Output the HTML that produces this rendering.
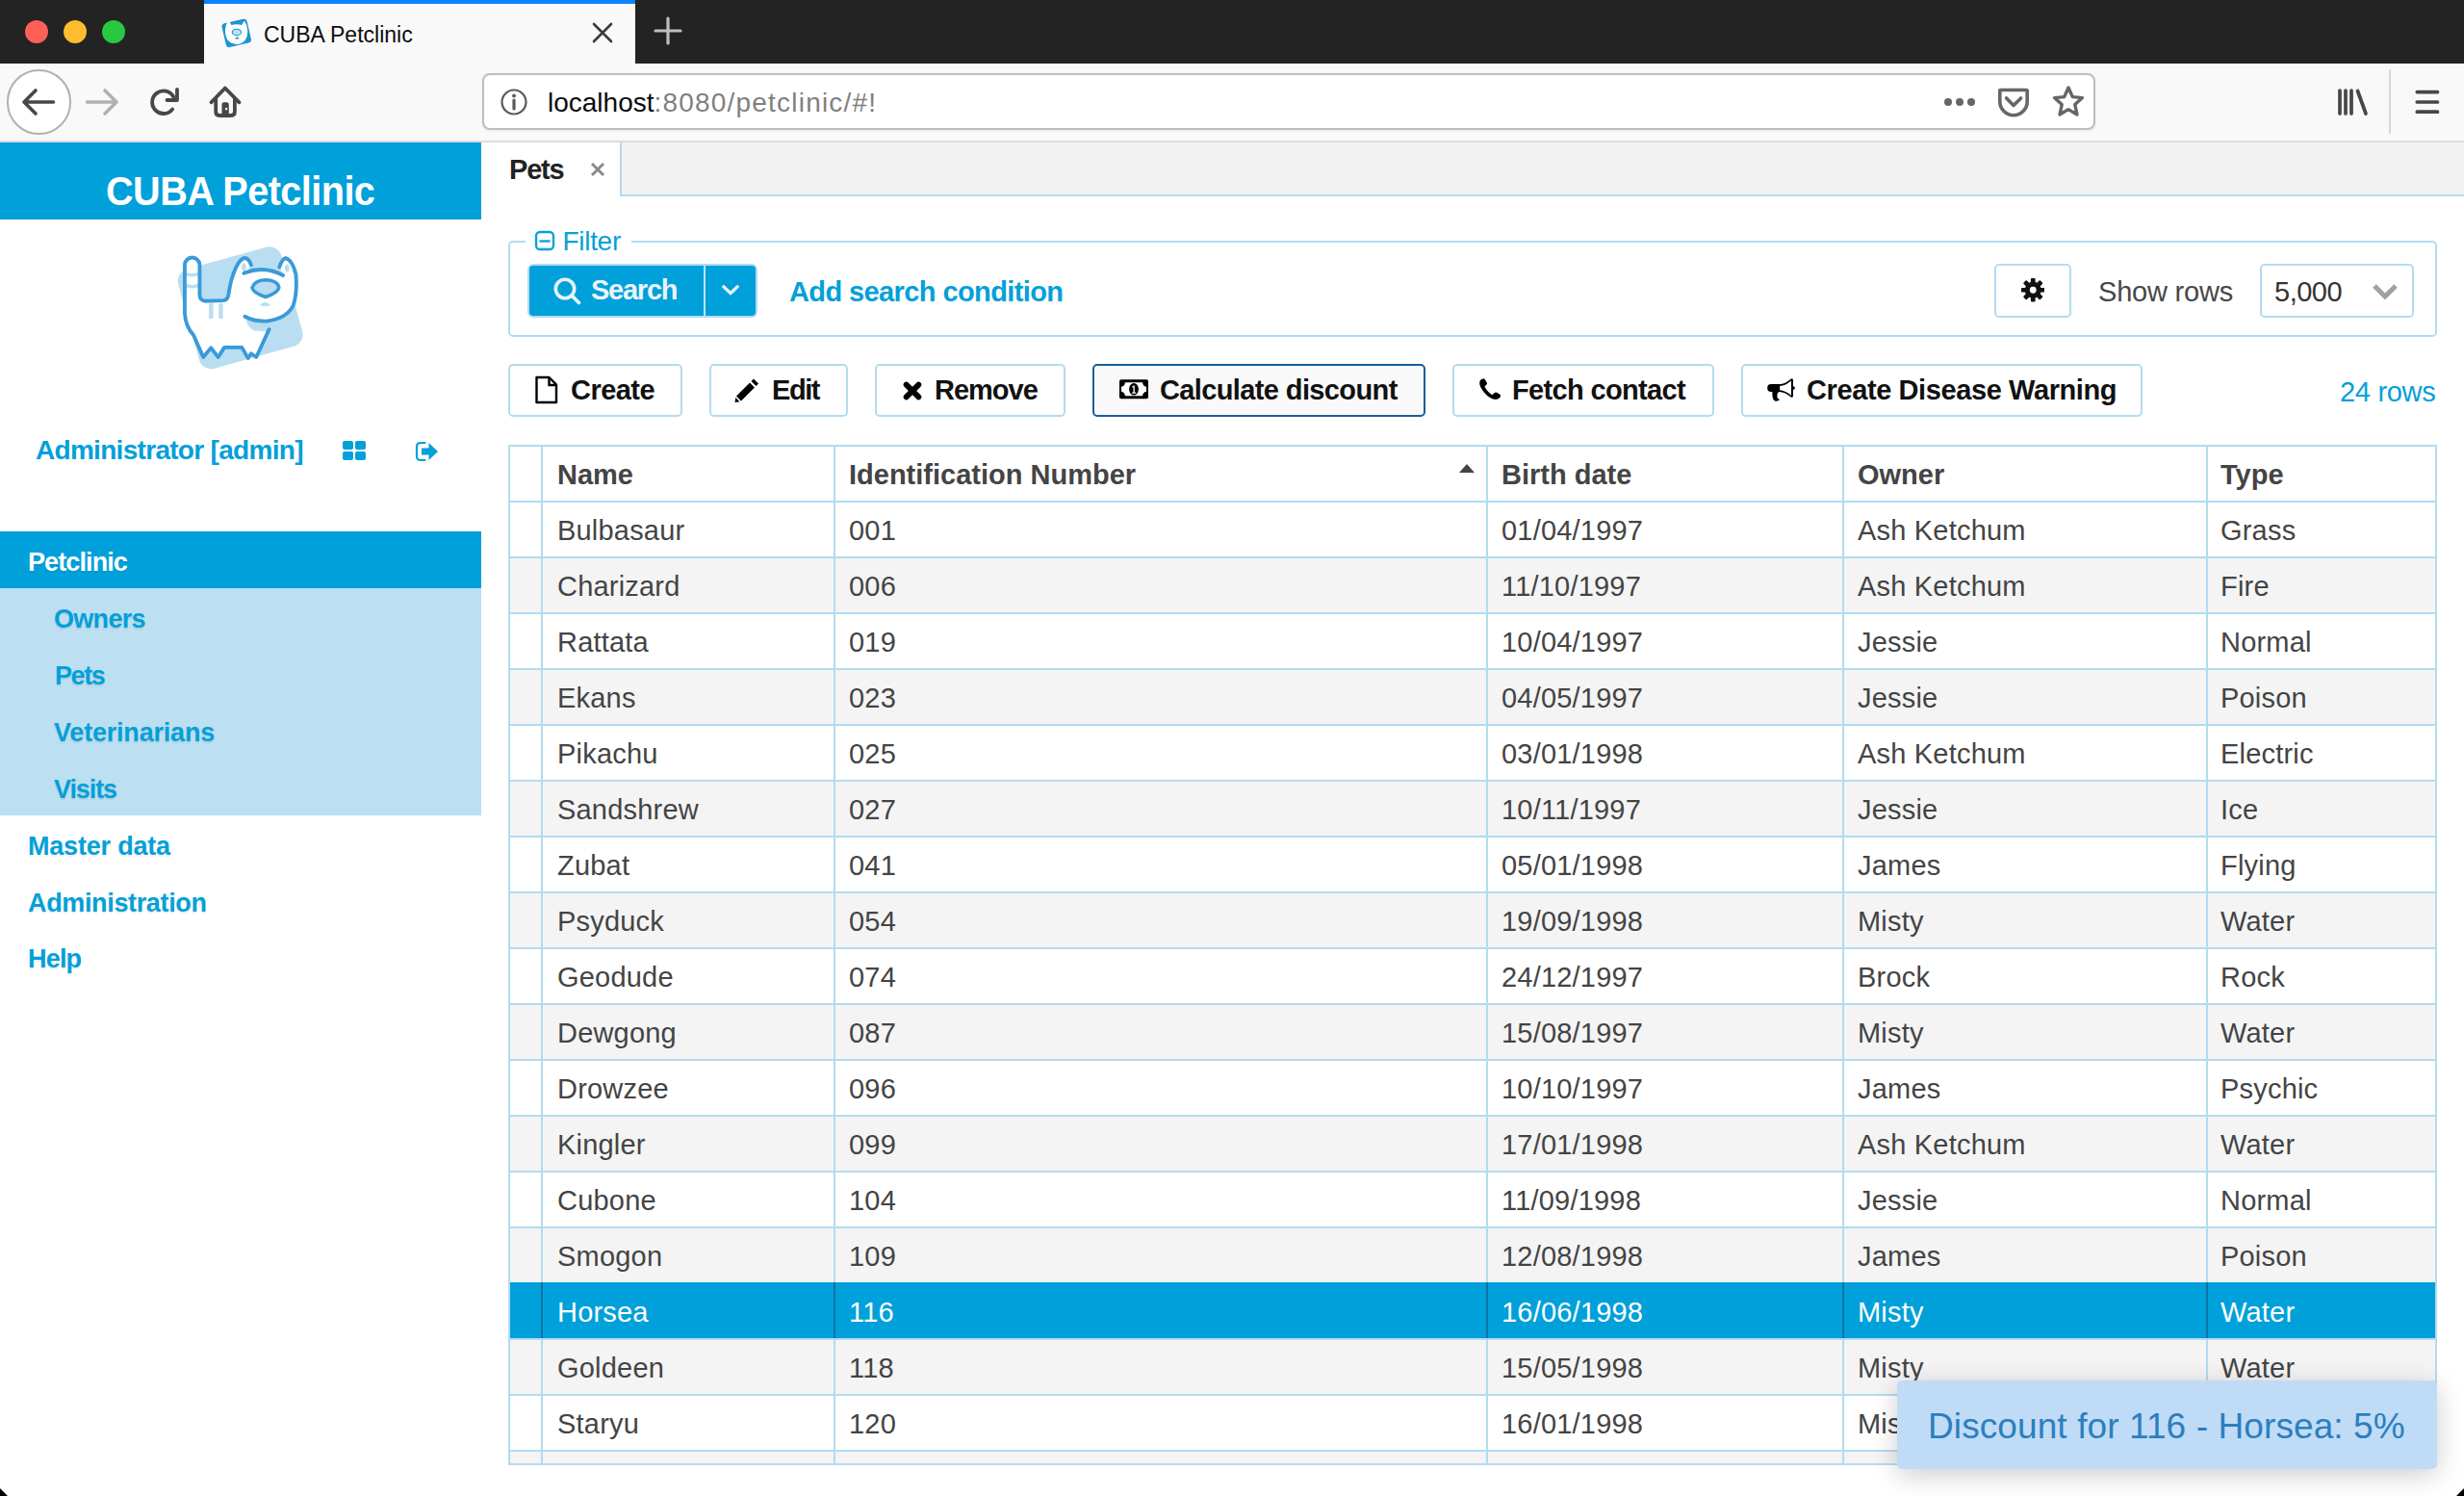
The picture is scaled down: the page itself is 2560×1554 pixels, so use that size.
<!DOCTYPE html>
<html><head><meta charset="utf-8"><title>CUBA Petclinic</title>
<style>
html,body{margin:0;padding:0;width:2560px;height:1554px;overflow:hidden;background:#fff}
body{position:relative;font-family:"Liberation Sans", sans-serif}
.a{position:absolute;display:block}
.t{position:absolute;white-space:nowrap;line-height:0;font-family:"Liberation Sans", sans-serif}
</style></head><body>
<div class="a" style="left:0px;top:0px;width:2560px;height:66px;background:#232323"></div>
<div class="a" style="left:26px;top:21px;width:24px;height:24px;background:#fe5f57;border-radius:50%"></div>
<div class="a" style="left:66px;top:21px;width:24px;height:24px;background:#febc2e;border-radius:50%"></div>
<div class="a" style="left:106px;top:21px;width:24px;height:24px;background:#28c840;border-radius:50%"></div>
<div class="a" style="left:212px;top:0px;width:448px;height:66px;background:#f9f9f9"></div>
<div class="a" style="left:212px;top:0px;width:448px;height:4px;background:#0a84ff"></div>
<svg class="a" style="left:220px;top:10px" width="60" height="50" viewBox="0 0 1795 1496"><rect x="370" y="350" width="800" height="760" rx="100" fill="#1a95d4" transform="rotate(-13 770 730)"/><path d="M420 600 Q440 430 520 340 Q580 400 610 480 Q770 430 930 480 Q970 400 1010 350 Q1100 450 1110 620 Q1130 820 1040 950 Q930 1075 770 1075 Q600 1070 500 950 Q410 820 420 600 Z" fill="#fff"/><ellipse cx="775" cy="700" rx="140" ry="95" fill="#bfe0f4" stroke="#1a95d4" stroke-width="35"/><path d="M715 915 L790 835 L860 915 Z" fill="#1a95d4"/></svg>
<div class="t" style="left:274px;top:36.03px;font-size:23px;color:#0c0c0d;">CUBA Petclinic</div>
<svg class="a" style="left:614px;top:22px" width="24" height="24" viewBox="0 0 24 24"><path d="M3 3 L21 21 M21 3 L3 21" stroke="#3b3b3b" stroke-width="2.6" stroke-linecap="round"/></svg>
<svg class="a" style="left:678px;top:16px" width="32" height="32" viewBox="0 0 32 32"><path d="M16 3 V29 M3 16 H29" stroke="#bfbfbf" stroke-width="3.2" stroke-linecap="round"/></svg>
<div class="a" style="left:0px;top:66px;width:2560px;height:80px;background:#f9f9f9"></div>
<div class="a" style="left:0px;top:146px;width:2560px;height:2px;background:#dcdcdc"></div>
<div class="a" style="left:6.5px;top:72px;width:67.5px;height:67.5px;background:#fff;border:2px solid #b1b1b1;border-radius:50%;box-sizing:border-box"></div>
<svg class="a" style="left:20px;top:86px" width="40" height="40" viewBox="0 0 40 40"><path d="M35.5 20 H5.5 M17 8 L5 20 L17 32" stroke="#474747" stroke-width="3.6" fill="none" stroke-linecap="round" stroke-linejoin="round"/></svg>
<svg class="a" style="left:86px;top:86px" width="40" height="40" viewBox="0 0 40 40"><path d="M4.5 20 H34.5 M23 8 L35 20 L23 32" stroke="#b1b1b1" stroke-width="3.6" fill="none" stroke-linecap="round" stroke-linejoin="round"/></svg>
<svg class="a" style="left:150px;top:86px" width="40" height="40" viewBox="0 0 40 40"><path d="M30.3 14.6 A11.8 11.8 0 1 0 29.1 27.6" stroke="#474747" stroke-width="3.8" fill="none" stroke-linecap="round"/><path d="M34 7 V18 H23.5" stroke="#474747" stroke-width="3.8" fill="none" stroke-linecap="round" stroke-linejoin="round"/></svg>
<svg class="a" style="left:214px;top:86px" width="40" height="40" viewBox="0 0 40 40"><path d="M5.5 20.3 L19.9 5.5 L34.5 20.3" stroke="#474747" stroke-width="3.8" fill="none" stroke-linecap="round" stroke-linejoin="round"/><path d="M10.2 16 V30 Q10.2 34 14.2 34 H25.9 Q29.9 34 29.9 30 V16" stroke="#474747" stroke-width="3.8" fill="none"/><path d="M16.5 33 V22.5 Q16.5 20.3 18.7 20.3 H21.6 Q23.8 20.3 23.8 22.5 V33 Z" fill="#474747"/><rect x="20" y="26" width="2.2" height="2.2" fill="#f9f9f9"/></svg>
<div class="a" style="left:501px;top:76px;width:1676px;height:59px;background:#fff;border:2px solid #bdbdbd;border-radius:8px;box-sizing:border-box;box-shadow:0 1px 3px rgba(0,0,0,0.08)"></div>
<svg class="a" style="left:518px;top:90px" width="32" height="32" viewBox="0 0 32 32"><circle cx="16" cy="16" r="12.5" stroke="#5a5a5a" stroke-width="2.2" fill="none"/><circle cx="16" cy="9.5" r="1.9" fill="#5a5a5a"/><path d="M16 14 V23" stroke="#5a5a5a" stroke-width="3.2" stroke-linecap="round"/></svg>
<div class="t" style="left:569px;top:107.30px;font-size:28px;color:#0c0c0d;">localhost<span style="color:#7f7f7f;letter-spacing:1.2px">:8080/petclinic/#!</span></div>
<div class="a" style="left:2020px;top:102px;width:8px;height:8px;background:#666;border-radius:50%"></div>
<div class="a" style="left:2032px;top:102px;width:8px;height:8px;background:#666;border-radius:50%"></div>
<div class="a" style="left:2044px;top:102px;width:8px;height:8px;background:#666;border-radius:50%"></div>
<svg class="a" style="left:2074px;top:88px" width="36" height="36" viewBox="0 0 36 36"><path d="M3.8 6 Q3.8 5.5 5 5.5 H31 Q32.2 5.5 32.2 6.5 V17.5 A14.2 14.2 0 0 1 3.8 17.5 Z" stroke="#666" stroke-width="3.6" fill="none" stroke-linejoin="round"/><path d="M10.6 13.9 L18 21.5 L25.6 13.9" stroke="#666" stroke-width="3.6" fill="none" stroke-linecap="round" stroke-linejoin="round"/></svg>
<svg class="a" style="left:2130px;top:88px" width="38" height="36" viewBox="0 0 38 36"><path d="M19 3 L23.3 12.6 L33.5 13.6 L25.8 20.6 L28 31 L19 25.6 L10 31 L12.2 20.6 L4.5 13.6 L14.7 12.6 Z" stroke="#666" stroke-width="3.4" fill="none" stroke-linejoin="round"/></svg>
<svg class="a" style="left:2426px;top:88px" width="38" height="36" viewBox="0 0 38 36"><path d="M5 6 V30 M11 6 V30 M17 6 V30 M23.5 6.5 L32 30" stroke="#474747" stroke-width="3.7" fill="none" stroke-linecap="round"/></svg>
<div class="a" style="left:2482px;top:72px;width:2px;height:67px;background:#d6d6d6"></div>
<svg class="a" style="left:2506px;top:90px" width="32" height="32" viewBox="0 0 32 32"><path d="M5.3 5.6 H26.5 M5.3 16 H26.5 M5.3 26.2 H26.5" stroke="#474747" stroke-width="3.7" stroke-linecap="round"/></svg>
<div class="a" style="left:0px;top:148px;width:500px;height:80px;background:#00a0da"></div>
<div class="t" style="left:110px;top:198.57px;font-size:42.5px;color:#fff;font-weight:700;letter-spacing:-0.6px;transform:scaleX(0.933);transform-origin:0 0">CUBA Petclinic</div>
<svg class="a" style="left:170px;top:240px" width="160" height="160" viewBox="0 0 1496 1496"><rect x="225" y="245" width="1040" height="1000" rx="120" fill="#b9def1" transform="rotate(-15.5 745 745)"/><path d="M205 330 A72 72 0 0 1 350 330 L350 620 Q352 680 410 680 L580 675 Q625 670 632 610 Q650 470 700 360 Q745 265 790 262 Q830 268 850 330 L800 400 Q970 340 1160 420 L1125 350 Q1150 270 1185 262 Q1250 280 1285 420 Q1300 600 1260 720 Q1200 850 1000 875 Q880 880 800 835 Q800 930 880 968 L1000 975 L1025 955 L900 1225 L850 1190 L820 1235 L760 1130 L590 1130 L530 1225 L460 1135 L385 1225 L290 1010 Q215 930 205 800 Z" fill="#fff"/><path d="M218 400 Q277 425 338 400 L338 432 Q277 455 218 432 Z M218 510 Q277 535 338 510 L338 545 Q277 568 218 545 Z" fill="#b9def1"/><rect x="440" y="700" width="42" height="155" rx="21" fill="#b9def1"/><rect x="535" y="700" width="42" height="155" rx="21" fill="#b9def1"/><path d="M930 720 Q985 665 1045 720 Q985 740 930 720 Z" fill="#b9def1"/><ellipse cx="780" cy="350" rx="22" ry="38" fill="#b9def1"/><ellipse cx="1200" cy="360" rx="22" ry="38" fill="#b9def1"/><path d="M850 330 Q830 268 790 262 Q745 265 700 360 Q650 470 632 610 Q625 670 580 675 L410 680 Q352 680 350 620 L350 330 A72 72 0 0 0 205 330 L205 800 Q215 930 290 1010 L385 1225 L460 1135 L530 1225 L590 1130 L760 1130 L820 1235 L850 1190 L900 1225 L1025 955" fill="none" stroke="#3a9ad9" stroke-width="36" stroke-linejoin="round" stroke-linecap="round"/><path d="M780 410 Q970 330 1160 430" fill="none" stroke="#3a9ad9" stroke-width="36" stroke-linecap="round"/><path d="M1125 350 Q1150 270 1185 262 Q1250 280 1285 420 Q1300 600 1260 720 Q1200 850 1000 875 Q880 880 790 830" fill="none" stroke="#3a9ad9" stroke-width="36" stroke-linecap="round"/><path d="M990 640 Q870 600 860 550 Q880 480 990 475 Q1110 480 1120 550 Q1110 600 990 640 Z" fill="#b9def1" stroke="#3a9ad9" stroke-width="34" stroke-linejoin="round"/></svg>
<div class="t" style="left:37px;top:468.30px;font-size:28px;color:#03a0d9;font-weight:700;letter-spacing:-0.7px;">Administrator [admin]</div>
<div class="a" style="left:356px;top:458px;width:11px;height:9px;background:#03a0d9;border-radius:2px"></div>
<div class="a" style="left:369px;top:458px;width:11px;height:9px;background:#03a0d9;border-radius:2px"></div>
<div class="a" style="left:356px;top:469px;width:11px;height:9px;background:#03a0d9;border-radius:2px"></div>
<div class="a" style="left:369px;top:469px;width:11px;height:9px;background:#03a0d9;border-radius:2px"></div>
<svg class="a" style="left:430px;top:457px" width="28" height="24" viewBox="0 0 28 24"><path d="M11.5 3 H7 Q3 3 3 7 V17 Q3 21 7 21 H11.5" stroke="#03a0d9" stroke-width="2.2" fill="none" stroke-linecap="round"/><path d="M8 8.5 H15.5 V3 L25 12 L15.5 21 V15.5 H8 Z" fill="#03a0d9"/></svg>
<div class="a" style="left:0px;top:552px;width:500px;height:59px;background:#00a0da"></div>
<div class="a" style="left:0px;top:611px;width:500px;height:235.5px;background:#bcdff2"></div>
<div class="t" style="left:29px;top:583.84px;font-size:27px;color:#fff;font-weight:700;letter-spacing:-0.9px;text-shadow:0 2px 1px rgba(0,0,0,0.07)">Petclinic</div>
<div class="t" style="left:56px;top:642.79px;font-size:27px;color:#03a0d9;font-weight:700;letter-spacing:-0.7px;text-shadow:0 2px 1px rgba(0,0,0,0.07)">Owners</div>
<div class="t" style="left:57px;top:701.74px;font-size:27px;color:#03a0d9;font-weight:700;letter-spacing:-1.4px;text-shadow:0 2px 1px rgba(0,0,0,0.07)">Pets</div>
<div class="t" style="left:56px;top:760.69px;font-size:27px;color:#03a0d9;font-weight:700;letter-spacing:-0.2px;text-shadow:0 2px 1px rgba(0,0,0,0.07)">Veterinarians</div>
<div class="t" style="left:56px;top:819.64px;font-size:27px;color:#03a0d9;font-weight:700;letter-spacing:-1.1px;text-shadow:0 2px 1px rgba(0,0,0,0.07)">Visits</div>
<div class="t" style="left:29px;top:878.59px;font-size:27px;color:#03a0d9;font-weight:700;letter-spacing:-0.2px;text-shadow:0 2px 1px rgba(0,0,0,0.07)">Master data</div>
<div class="t" style="left:29px;top:937.54px;font-size:27px;color:#03a0d9;font-weight:700;letter-spacing:-0.35px;text-shadow:0 2px 1px rgba(0,0,0,0.07)">Administration</div>
<div class="t" style="left:29px;top:996.49px;font-size:27px;color:#03a0d9;font-weight:700;letter-spacing:-0.8px;text-shadow:0 2px 1px rgba(0,0,0,0.07)">Help</div>
<div class="a" style="left:500px;top:148px;width:2060px;height:1406px;background:#fff"></div>
<div class="a" style="left:646px;top:148px;width:1914px;height:54px;background:#f2f2f2"></div>
<div class="a" style="left:644px;top:148px;width:2px;height:56px;background:#b3dbf1"></div>
<div class="a" style="left:644px;top:202px;width:1916px;height:2px;background:#b3dbf1"></div>
<div class="t" style="left:529px;top:175.85px;font-size:29px;color:#222;font-weight:700;letter-spacing:-1.2px;">Pets</div>
<svg class="a" style="left:611px;top:166px" width="20" height="20" viewBox="0 0 20 20"><path d="M4 4 L16 16 M16 4 L4 16" stroke="#8a8a8a" stroke-width="2.9"/></svg>
<div class="a" style="left:528px;top:250px;width:2004px;height:100px;border:2px solid #b3dbf1;border-radius:5px;box-sizing:border-box"></div>
<div class="a" style="left:546px;top:246px;width:110px;height:8px;background:#fff"></div>
<svg class="a" style="left:554px;top:238px" width="24" height="24" viewBox="0 0 24 24"><rect x="3" y="3" width="18" height="18" rx="4" stroke="#03a0d9" stroke-width="2.3" fill="none"/><path d="M6.5 12.5 H17.5" stroke="#03a0d9" stroke-width="2.3"/></svg>
<div class="t" style="left:584.5px;top:251.00px;font-size:28px;color:#03a0d9;letter-spacing:-0.3px;">Filter</div>
<div class="a" style="left:548px;top:274px;width:239px;height:56px;border:2px solid #b3dbf1;border-radius:6px;box-sizing:border-box;background:#00a0da"></div>
<div class="a" style="left:731px;top:276px;width:2px;height:52px;background:#bfe3f3"></div>
<svg class="a" style="left:572px;top:285px" width="36" height="36" viewBox="0 0 36 36"><circle cx="15" cy="15" r="9.7" stroke="#e6f4fa" stroke-width="3.6" fill="none"/><path d="M22 22 L29.5 29.5" stroke="#e6f4fa" stroke-width="3.8" stroke-linecap="round"/></svg>
<div class="t" style="left:614px;top:301.25px;font-size:29px;color:#e9f5fb;font-weight:700;letter-spacing:-1.25px;">Search</div>
<svg class="a" style="left:746px;top:290px" width="26" height="20" viewBox="0 0 26 20"><path d="M6 8 L13 14.6 L20 8" stroke="#e6f4fa" stroke-width="3.3" fill="none" stroke-linecap="square"/></svg>
<div class="t" style="left:820px;top:302.95px;font-size:29px;color:#03a0d9;font-weight:700;letter-spacing:-0.6px;">Add search condition</div>
<div class="a" style="left:2072px;top:274px;width:80px;height:56px;border:2px solid #b3dbf1;border-radius:5px;box-sizing:border-box;background:#fff"></div>
<svg class="a" style="left:2099.5px;top:289px" width="24.5" height="24.5" viewBox="0 0 26 26"><g fill="#111"><rect x="10.5" y="0" width="5" height="8" rx="1" transform="rotate(0 13 13)"/><rect x="10.5" y="0" width="5" height="8" rx="1" transform="rotate(45 13 13)"/><rect x="10.5" y="0" width="5" height="8" rx="1" transform="rotate(90 13 13)"/><rect x="10.5" y="0" width="5" height="8" rx="1" transform="rotate(135 13 13)"/><rect x="10.5" y="0" width="5" height="8" rx="1" transform="rotate(180 13 13)"/><rect x="10.5" y="0" width="5" height="8" rx="1" transform="rotate(225 13 13)"/><rect x="10.5" y="0" width="5" height="8" rx="1" transform="rotate(270 13 13)"/><rect x="10.5" y="0" width="5" height="8" rx="1" transform="rotate(315 13 13)"/><circle cx="13" cy="13" r="9"/></g><circle cx="13" cy="13" r="3.6" fill="#fff"/></svg>
<div class="t" style="left:2180px;top:302.95px;font-size:29px;color:#474747;letter-spacing:-0.2px;">Show rows</div>
<div class="a" style="left:2348px;top:274px;width:160px;height:56px;border:2px solid #b3dbf1;border-radius:5px;box-sizing:border-box;background:#fff"></div>
<div class="t" style="left:2363px;top:302.95px;font-size:29px;color:#333;letter-spacing:-0.5px;">5,000</div>
<svg class="a" style="left:2462px;top:292px" width="32" height="24" viewBox="0 0 32 24"><path d="M5 5 L16 16 L27 5" stroke="#a0a0a0" stroke-width="5" fill="none"/></svg>
<div class="a" style="left:528px;top:378px;width:181px;height:55px;border:2px solid #b3dbf1;border-radius:5px;box-sizing:border-box;background:#fff"></div>
<div class="t" style="left:593px;top:404.95px;font-size:29px;color:#111;font-weight:700;letter-spacing:-0.55px;">Create</div>
<div class="a" style="left:737px;top:378px;width:144px;height:55px;border:2px solid #b3dbf1;border-radius:5px;box-sizing:border-box;background:#fff"></div>
<div class="t" style="left:802px;top:404.95px;font-size:29px;color:#111;font-weight:700;letter-spacing:-1.45px;">Edit</div>
<div class="a" style="left:909px;top:378px;width:198px;height:55px;border:2px solid #b3dbf1;border-radius:5px;box-sizing:border-box;background:#fff"></div>
<div class="t" style="left:971px;top:404.95px;font-size:29px;color:#111;font-weight:700;letter-spacing:-1.0px;">Remove</div>
<div class="a" style="left:1135px;top:378px;width:346px;height:55px;border:2px solid #1b5d99;border-radius:5px;box-sizing:border-box;background:#f9f9f9"></div>
<div class="t" style="left:1205px;top:404.95px;font-size:29px;color:#111;font-weight:700;letter-spacing:-0.62px;">Calculate discount</div>
<div class="a" style="left:1509px;top:378px;width:272px;height:55px;border:2px solid #b3dbf1;border-radius:5px;box-sizing:border-box;background:#fff"></div>
<div class="t" style="left:1571px;top:404.95px;font-size:29px;color:#111;font-weight:700;letter-spacing:-0.66px;">Fetch contact</div>
<div class="a" style="left:1809px;top:378px;width:417px;height:55px;border:2px solid #b3dbf1;border-radius:5px;box-sizing:border-box;background:#fff"></div>
<div class="t" style="left:1877px;top:404.95px;font-size:29px;color:#111;font-weight:700;letter-spacing:-0.4px;">Create Disease Warning</div>
<svg class="a" style="left:554px;top:389px" width="28" height="32" viewBox="0 0 28 32"><path d="M3.5 3 H16.5 L24 10.5 V29 H3.5 Z" stroke="#000" stroke-width="2.4" fill="none" stroke-linejoin="round"/><path d="M16.5 3.5 V11 H24" stroke="#000" stroke-width="2.4" fill="none"/></svg>
<svg class="a" style="left:762px;top:392px" width="28" height="28" viewBox="0 0 28 28"><path d="M21 1.5 L26 6.5 L23.5 9 L18.5 4 Z M17 5.5 L22 10.5 L8 24.5 L3 19.5 Z M2.3 21 L6.5 25.2 L1.5 26 Z" fill="#000"/></svg>
<svg class="a" style="left:935px;top:393px" width="26" height="26" viewBox="0 0 26 26"><path d="M6.6 6.6 L19.4 19.4 M19.4 6.6 L6.6 19.4" stroke="#000" stroke-width="5.8" stroke-linecap="round"/></svg>
<svg class="a" style="left:1161px;top:393px" width="34" height="24" viewBox="0 0 34 24"><rect x="2" y="1.3" width="30" height="20" rx="1.8" fill="#000"/><path d="M8 4.3 H26 Q26.5 8.3 30 8.8 V13.8 Q26.5 14.3 26 18.3 H8 Q7.5 14.3 4 13.8 V8.8 Q7.5 8.3 8 4.3 Z" fill="#fff"/><ellipse cx="17" cy="11.3" rx="4.9" ry="6.3" fill="#000"/><path d="M15.3 8.6 L17.8 7.2 V14.6 H19.2 V15.8 H15.2 V14.6 H16.5 V9.2 L15.3 9.6 Z" fill="#fff"/></svg>
<svg class="a" style="left:1525px;top:380px" width="50" height="50" viewBox="0 0 1496 1496"><path d="M490 395 Q530 400 545 440 L600 540 Q605 575 570 600 L520 640 Q570 740 660 830 Q740 905 770 895 L830 840 Q860 815 900 830 L1000 890 Q1030 915 1015 960 Q980 1040 880 1045 Q760 1045 620 940 Q470 820 395 660 Q350 560 370 480 Q395 410 490 395 Z" fill="#000"/></svg>
<svg class="a" style="left:1825px;top:380px" width="50" height="50" viewBox="0 0 1496 1496"><path d="M450 570 H720 V805 H450 A115 117 0 0 1 450 570 Z" fill="#000"/><path d="M490 790 L705 800 Q640 840 640 890 Q662 925 635 960 Q640 1010 720 1055 Q660 1110 570 1095 Q510 1070 500 980 Q485 880 490 790 Z" fill="#000"/><path d="M700 575 Q900 560 1060 410 Q1090 385 1112 398 Q1137 418 1137 450 V930 Q1137 962 1112 977 Q1085 987 1060 962 Q900 820 700 805 Z M722 628 Q900 612 1077 462 V918 Q900 770 722 752 Z" fill="#000" fill-rule="evenodd"/><path d="M1130 628 Q1195 638 1195 686 Q1195 736 1130 746 Z" fill="#000"/></svg>
<div class="t" style="left:2431px;top:406.55px;font-size:29px;color:#03a0d9;letter-spacing:-0.3px;">24 rows</div>
<div class="a" style="left:530px;top:464px;width:2000px;height:1056px;background:#fff"></div>
<div class="a" style="left:530px;top:580px;width:2000px;height:56px;background:#f4f4f4"></div>
<div class="a" style="left:530px;top:696px;width:2000px;height:56px;background:#f4f4f4"></div>
<div class="a" style="left:530px;top:812px;width:2000px;height:56px;background:#f4f4f4"></div>
<div class="a" style="left:530px;top:928px;width:2000px;height:56px;background:#f4f4f4"></div>
<div class="a" style="left:530px;top:1044px;width:2000px;height:56px;background:#f4f4f4"></div>
<div class="a" style="left:530px;top:1160px;width:2000px;height:56px;background:#f4f4f4"></div>
<div class="a" style="left:530px;top:1276px;width:2000px;height:56px;background:#f4f4f4"></div>
<div class="a" style="left:530px;top:1392px;width:2000px;height:56px;background:#f4f4f4"></div>
<div class="a" style="left:530px;top:1508px;width:2000px;height:12px;background:#f4f4f4"></div>
<div class="a" style="left:528px;top:462px;width:2004px;height:2px;background:#b3dbf1"></div>
<div class="a" style="left:528px;top:520px;width:2004px;height:2px;background:#b3dbf1"></div>
<div class="a" style="left:528px;top:578px;width:2004px;height:2px;background:#b3dbf1"></div>
<div class="a" style="left:528px;top:636px;width:2004px;height:2px;background:#b3dbf1"></div>
<div class="a" style="left:528px;top:694px;width:2004px;height:2px;background:#b3dbf1"></div>
<div class="a" style="left:528px;top:752px;width:2004px;height:2px;background:#b3dbf1"></div>
<div class="a" style="left:528px;top:810px;width:2004px;height:2px;background:#b3dbf1"></div>
<div class="a" style="left:528px;top:868px;width:2004px;height:2px;background:#b3dbf1"></div>
<div class="a" style="left:528px;top:926px;width:2004px;height:2px;background:#b3dbf1"></div>
<div class="a" style="left:528px;top:984px;width:2004px;height:2px;background:#b3dbf1"></div>
<div class="a" style="left:528px;top:1042px;width:2004px;height:2px;background:#b3dbf1"></div>
<div class="a" style="left:528px;top:1100px;width:2004px;height:2px;background:#b3dbf1"></div>
<div class="a" style="left:528px;top:1158px;width:2004px;height:2px;background:#b3dbf1"></div>
<div class="a" style="left:528px;top:1216px;width:2004px;height:2px;background:#b3dbf1"></div>
<div class="a" style="left:528px;top:1274px;width:2004px;height:2px;background:#b3dbf1"></div>
<div class="a" style="left:528px;top:1332px;width:2004px;height:2px;background:#b3dbf1"></div>
<div class="a" style="left:528px;top:1390px;width:2004px;height:2px;background:#b3dbf1"></div>
<div class="a" style="left:528px;top:1448px;width:2004px;height:2px;background:#b3dbf1"></div>
<div class="a" style="left:528px;top:1506px;width:2004px;height:2px;background:#b3dbf1"></div>
<div class="a" style="left:528px;top:1520px;width:2004px;height:2px;background:#b3dbf1"></div>
<div class="a" style="left:528px;top:462px;width:2px;height:1060px;background:#b3dbf1"></div>
<div class="a" style="left:2530px;top:462px;width:2px;height:1060px;background:#b3dbf1"></div>
<div class="a" style="left:562px;top:462px;width:2px;height:1060px;background:#b3dbf1"></div>
<div class="a" style="left:866px;top:462px;width:2px;height:1060px;background:#b3dbf1"></div>
<div class="a" style="left:1544px;top:462px;width:2px;height:1060px;background:#b3dbf1"></div>
<div class="a" style="left:1914px;top:462px;width:2px;height:1060px;background:#b3dbf1"></div>
<div class="a" style="left:2292px;top:462px;width:2px;height:1060px;background:#b3dbf1"></div>
<div class="a" style="left:530px;top:1332px;width:2000px;height:58px;background:#00a0da"></div>
<div class="a" style="left:562px;top:1332px;width:2px;height:58px;background:#0a75a3"></div>
<div class="a" style="left:866px;top:1332px;width:2px;height:58px;background:#0a75a3"></div>
<div class="a" style="left:1544px;top:1332px;width:2px;height:58px;background:#0a75a3"></div>
<div class="a" style="left:1914px;top:1332px;width:2px;height:58px;background:#0a75a3"></div>
<div class="a" style="left:2292px;top:1332px;width:2px;height:58px;background:#0a75a3"></div>
<div class="t" style="left:579px;top:492.70px;font-size:29px;color:#444;font-weight:700;">Name</div>
<div class="t" style="left:882px;top:492.70px;font-size:29px;color:#444;font-weight:700;">Identification Number</div>
<div class="t" style="left:1560px;top:492.70px;font-size:29px;color:#444;font-weight:700;">Birth date</div>
<div class="t" style="left:1930px;top:492.70px;font-size:29px;color:#444;font-weight:700;">Owner</div>
<div class="t" style="left:2307px;top:492.70px;font-size:29px;color:#444;font-weight:700;">Type</div>
<svg class="a" style="left:1514px;top:480px" width="20" height="12" viewBox="0 0 20 12"><path d="M2 11 L10 2 L18 11 Z" fill="#444"/></svg>
<div class="t" style="left:579px;top:550.95px;font-size:29px;color:#444;letter-spacing:0.2px;">Bulbasaur</div>
<div class="t" style="left:882px;top:550.95px;font-size:29px;color:#444;letter-spacing:0.2px;">001</div>
<div class="t" style="left:1560px;top:550.95px;font-size:29px;color:#444;letter-spacing:0.2px;">01/04/1997</div>
<div class="t" style="left:1930px;top:550.95px;font-size:29px;color:#444;letter-spacing:0.2px;">Ash Ketchum</div>
<div class="t" style="left:2307px;top:550.95px;font-size:29px;color:#444;letter-spacing:0.2px;">Grass</div>
<div class="t" style="left:579px;top:608.95px;font-size:29px;color:#444;letter-spacing:0.2px;">Charizard</div>
<div class="t" style="left:882px;top:608.95px;font-size:29px;color:#444;letter-spacing:0.2px;">006</div>
<div class="t" style="left:1560px;top:608.95px;font-size:29px;color:#444;letter-spacing:0.2px;">11/10/1997</div>
<div class="t" style="left:1930px;top:608.95px;font-size:29px;color:#444;letter-spacing:0.2px;">Ash Ketchum</div>
<div class="t" style="left:2307px;top:608.95px;font-size:29px;color:#444;letter-spacing:0.2px;">Fire</div>
<div class="t" style="left:579px;top:666.95px;font-size:29px;color:#444;letter-spacing:0.2px;">Rattata</div>
<div class="t" style="left:882px;top:666.95px;font-size:29px;color:#444;letter-spacing:0.2px;">019</div>
<div class="t" style="left:1560px;top:666.95px;font-size:29px;color:#444;letter-spacing:0.2px;">10/04/1997</div>
<div class="t" style="left:1930px;top:666.95px;font-size:29px;color:#444;letter-spacing:0.2px;">Jessie</div>
<div class="t" style="left:2307px;top:666.95px;font-size:29px;color:#444;letter-spacing:0.2px;">Normal</div>
<div class="t" style="left:579px;top:724.95px;font-size:29px;color:#444;letter-spacing:0.2px;">Ekans</div>
<div class="t" style="left:882px;top:724.95px;font-size:29px;color:#444;letter-spacing:0.2px;">023</div>
<div class="t" style="left:1560px;top:724.95px;font-size:29px;color:#444;letter-spacing:0.2px;">04/05/1997</div>
<div class="t" style="left:1930px;top:724.95px;font-size:29px;color:#444;letter-spacing:0.2px;">Jessie</div>
<div class="t" style="left:2307px;top:724.95px;font-size:29px;color:#444;letter-spacing:0.2px;">Poison</div>
<div class="t" style="left:579px;top:782.95px;font-size:29px;color:#444;letter-spacing:0.2px;">Pikachu</div>
<div class="t" style="left:882px;top:782.95px;font-size:29px;color:#444;letter-spacing:0.2px;">025</div>
<div class="t" style="left:1560px;top:782.95px;font-size:29px;color:#444;letter-spacing:0.2px;">03/01/1998</div>
<div class="t" style="left:1930px;top:782.95px;font-size:29px;color:#444;letter-spacing:0.2px;">Ash Ketchum</div>
<div class="t" style="left:2307px;top:782.95px;font-size:29px;color:#444;letter-spacing:0.2px;">Electric</div>
<div class="t" style="left:579px;top:840.95px;font-size:29px;color:#444;letter-spacing:0.2px;">Sandshrew</div>
<div class="t" style="left:882px;top:840.95px;font-size:29px;color:#444;letter-spacing:0.2px;">027</div>
<div class="t" style="left:1560px;top:840.95px;font-size:29px;color:#444;letter-spacing:0.2px;">10/11/1997</div>
<div class="t" style="left:1930px;top:840.95px;font-size:29px;color:#444;letter-spacing:0.2px;">Jessie</div>
<div class="t" style="left:2307px;top:840.95px;font-size:29px;color:#444;letter-spacing:0.2px;">Ice</div>
<div class="t" style="left:579px;top:898.95px;font-size:29px;color:#444;letter-spacing:0.2px;">Zubat</div>
<div class="t" style="left:882px;top:898.95px;font-size:29px;color:#444;letter-spacing:0.2px;">041</div>
<div class="t" style="left:1560px;top:898.95px;font-size:29px;color:#444;letter-spacing:0.2px;">05/01/1998</div>
<div class="t" style="left:1930px;top:898.95px;font-size:29px;color:#444;letter-spacing:0.2px;">James</div>
<div class="t" style="left:2307px;top:898.95px;font-size:29px;color:#444;letter-spacing:0.2px;">Flying</div>
<div class="t" style="left:579px;top:956.95px;font-size:29px;color:#444;letter-spacing:0.2px;">Psyduck</div>
<div class="t" style="left:882px;top:956.95px;font-size:29px;color:#444;letter-spacing:0.2px;">054</div>
<div class="t" style="left:1560px;top:956.95px;font-size:29px;color:#444;letter-spacing:0.2px;">19/09/1998</div>
<div class="t" style="left:1930px;top:956.95px;font-size:29px;color:#444;letter-spacing:0.2px;">Misty</div>
<div class="t" style="left:2307px;top:956.95px;font-size:29px;color:#444;letter-spacing:0.2px;">Water</div>
<div class="t" style="left:579px;top:1014.95px;font-size:29px;color:#444;letter-spacing:0.2px;">Geodude</div>
<div class="t" style="left:882px;top:1014.95px;font-size:29px;color:#444;letter-spacing:0.2px;">074</div>
<div class="t" style="left:1560px;top:1014.95px;font-size:29px;color:#444;letter-spacing:0.2px;">24/12/1997</div>
<div class="t" style="left:1930px;top:1014.95px;font-size:29px;color:#444;letter-spacing:0.2px;">Brock</div>
<div class="t" style="left:2307px;top:1014.95px;font-size:29px;color:#444;letter-spacing:0.2px;">Rock</div>
<div class="t" style="left:579px;top:1072.95px;font-size:29px;color:#444;letter-spacing:0.2px;">Dewgong</div>
<div class="t" style="left:882px;top:1072.95px;font-size:29px;color:#444;letter-spacing:0.2px;">087</div>
<div class="t" style="left:1560px;top:1072.95px;font-size:29px;color:#444;letter-spacing:0.2px;">15/08/1997</div>
<div class="t" style="left:1930px;top:1072.95px;font-size:29px;color:#444;letter-spacing:0.2px;">Misty</div>
<div class="t" style="left:2307px;top:1072.95px;font-size:29px;color:#444;letter-spacing:0.2px;">Water</div>
<div class="t" style="left:579px;top:1130.95px;font-size:29px;color:#444;letter-spacing:0.2px;">Drowzee</div>
<div class="t" style="left:882px;top:1130.95px;font-size:29px;color:#444;letter-spacing:0.2px;">096</div>
<div class="t" style="left:1560px;top:1130.95px;font-size:29px;color:#444;letter-spacing:0.2px;">10/10/1997</div>
<div class="t" style="left:1930px;top:1130.95px;font-size:29px;color:#444;letter-spacing:0.2px;">James</div>
<div class="t" style="left:2307px;top:1130.95px;font-size:29px;color:#444;letter-spacing:0.2px;">Psychic</div>
<div class="t" style="left:579px;top:1188.95px;font-size:29px;color:#444;letter-spacing:0.2px;">Kingler</div>
<div class="t" style="left:882px;top:1188.95px;font-size:29px;color:#444;letter-spacing:0.2px;">099</div>
<div class="t" style="left:1560px;top:1188.95px;font-size:29px;color:#444;letter-spacing:0.2px;">17/01/1998</div>
<div class="t" style="left:1930px;top:1188.95px;font-size:29px;color:#444;letter-spacing:0.2px;">Ash Ketchum</div>
<div class="t" style="left:2307px;top:1188.95px;font-size:29px;color:#444;letter-spacing:0.2px;">Water</div>
<div class="t" style="left:579px;top:1246.95px;font-size:29px;color:#444;letter-spacing:0.2px;">Cubone</div>
<div class="t" style="left:882px;top:1246.95px;font-size:29px;color:#444;letter-spacing:0.2px;">104</div>
<div class="t" style="left:1560px;top:1246.95px;font-size:29px;color:#444;letter-spacing:0.2px;">11/09/1998</div>
<div class="t" style="left:1930px;top:1246.95px;font-size:29px;color:#444;letter-spacing:0.2px;">Jessie</div>
<div class="t" style="left:2307px;top:1246.95px;font-size:29px;color:#444;letter-spacing:0.2px;">Normal</div>
<div class="t" style="left:579px;top:1304.95px;font-size:29px;color:#444;letter-spacing:0.2px;">Smogon</div>
<div class="t" style="left:882px;top:1304.95px;font-size:29px;color:#444;letter-spacing:0.2px;">109</div>
<div class="t" style="left:1560px;top:1304.95px;font-size:29px;color:#444;letter-spacing:0.2px;">12/08/1998</div>
<div class="t" style="left:1930px;top:1304.95px;font-size:29px;color:#444;letter-spacing:0.2px;">James</div>
<div class="t" style="left:2307px;top:1304.95px;font-size:29px;color:#444;letter-spacing:0.2px;">Poison</div>
<div class="t" style="left:579px;top:1362.95px;font-size:29px;color:#fff;letter-spacing:0.2px;">Horsea</div>
<div class="t" style="left:882px;top:1362.95px;font-size:29px;color:#fff;letter-spacing:0.2px;">116</div>
<div class="t" style="left:1560px;top:1362.95px;font-size:29px;color:#fff;letter-spacing:0.2px;">16/06/1998</div>
<div class="t" style="left:1930px;top:1362.95px;font-size:29px;color:#fff;letter-spacing:0.2px;">Misty</div>
<div class="t" style="left:2307px;top:1362.95px;font-size:29px;color:#fff;letter-spacing:0.2px;">Water</div>
<div class="t" style="left:579px;top:1420.95px;font-size:29px;color:#444;letter-spacing:0.2px;">Goldeen</div>
<div class="t" style="left:882px;top:1420.95px;font-size:29px;color:#444;letter-spacing:0.2px;">118</div>
<div class="t" style="left:1560px;top:1420.95px;font-size:29px;color:#444;letter-spacing:0.2px;">15/05/1998</div>
<div class="t" style="left:1930px;top:1420.95px;font-size:29px;color:#444;letter-spacing:0.2px;">Misty</div>
<div class="t" style="left:2307px;top:1420.95px;font-size:29px;color:#444;letter-spacing:0.2px;">Water</div>
<div class="t" style="left:579px;top:1478.95px;font-size:29px;color:#444;letter-spacing:0.2px;">Staryu</div>
<div class="t" style="left:882px;top:1478.95px;font-size:29px;color:#444;letter-spacing:0.2px;">120</div>
<div class="t" style="left:1560px;top:1478.95px;font-size:29px;color:#444;letter-spacing:0.2px;">16/01/1998</div>
<div class="t" style="left:1930px;top:1478.95px;font-size:29px;color:#444;letter-spacing:0.2px;">Misty</div>
<div class="t" style="left:2307px;top:1478.95px;font-size:29px;color:#444;letter-spacing:0.2px;">Water</div>
<div class="a" style="left:1971px;top:1434px;width:561px;height:92px;background:#c0dbf5;border-radius:5px;box-shadow:0 6px 28px rgba(0,0,0,0.20)"></div>
<div class="t" style="left:2003px;top:1482.18px;font-size:37px;color:#2a7fbf;letter-spacing:0.1px;">Discount for 116 - Horsea: 5%</div>
<svg class="a" style="left:2552px;top:1546px" width="8" height="8" viewBox="0 0 8 8"><path d="M8 0 V8 H0 Z" fill="#000"/></svg>
<svg class="a" style="left:0px;top:1546px" width="8" height="8" viewBox="0 0 8 8"><path d="M0 0 V8 H8 Z" fill="#000"/></svg>
</body></html>
